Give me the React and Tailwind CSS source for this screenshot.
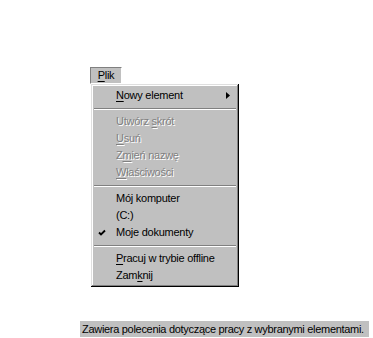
import React from "react"

const font = { fontFamily: '"Liberation Sans", Arial, sans-serif' }

function U({ children }) {
  return <span className="underline decoration-1 underline-offset-[2px]">{children}</span>
}

function Item({ children, disabled, arrow, checked }) {
  return (
    <div
      className={`relative h-[17px] flex items-center pl-[22px] pr-[6px] text-[11px] tracking-[-0.25px] leading-none ${
        disabled ? "text-[#808080] [text-shadow:1px_1px_0_#fff]" : "text-black"
      }`}
    >
      {checked && (
        <svg className="absolute left-[4px] top-[5px]" width="8" height="8" viewBox="0 0 8 8">
          <path d="M1 3.5 L3 5.5 L7 1.5" stroke="#000" strokeWidth="1.8" fill="none" />
        </svg>
      )}
      <span className="flex-1 whitespace-nowrap">{children}</span>
      {arrow && (
        <svg width="4" height="7" viewBox="0 0 4 7">
          <path d="M0 0 L4 3.5 L0 7 Z" fill="#000" />
        </svg>
      )}
    </div>
  )
}

function Sep() {
  return (
    <div className="h-[9px] flex flex-col justify-center">
      <div className="h-px bg-[#808080]" />
      <div className="h-px bg-white" />
    </div>
  )
}

export default function App() {
  return (
    <div className="w-[373px] h-[338px] bg-white pt-[67px]" style={font}>
      <div className="ml-[90px] w-[32px] h-[17px] bg-[#c0c0c0] border-t border-l border-[#808080] border-b-white border-r-white border-r border-b flex items-center justify-center text-[11px] tracking-[-0.25px] text-black">
        <U>P</U>lik
      </div>
      <div className="ml-[91px] w-[148px] bg-[#c0c0c0] p-[3px] shadow-[inset_-1px_-1px_#000,inset_1px_1px_#dfdfdf,inset_-2px_-2px_#808080,inset_2px_2px_#fff]">
        <Item arrow>
          <U>N</U>owy element
        </Item>
        <Sep />
        <Item disabled>
          Utwórz <U>s</U>krót
        </Item>
        <Item disabled>
          <U>U</U>suń
        </Item>
        <Item disabled>
          Z<U>m</U>ień nazwę
        </Item>
        <Item disabled>
          <U>W</U>łaściwości
        </Item>
        <Sep />
        <Item>Mój komputer</Item>
        <Item>(C:)</Item>
        <Item checked>Moje dokumenty</Item>
        <Sep />
        <Item>
          <U>P</U>racuj w trybie offline
        </Item>
        <Item>
          Zam<U>k</U>nij
        </Item>
      </div>
      <div className="mt-[34px] ml-[80px] w-[289px] h-[16px] bg-[#c0c0c0] flex items-center pl-[2px] text-[11px] tracking-[-0.3px] text-black whitespace-nowrap">
        Zawiera polecenia dotyczące pracy z wybranymi elementami.
      </div>
    </div>
  )
}
